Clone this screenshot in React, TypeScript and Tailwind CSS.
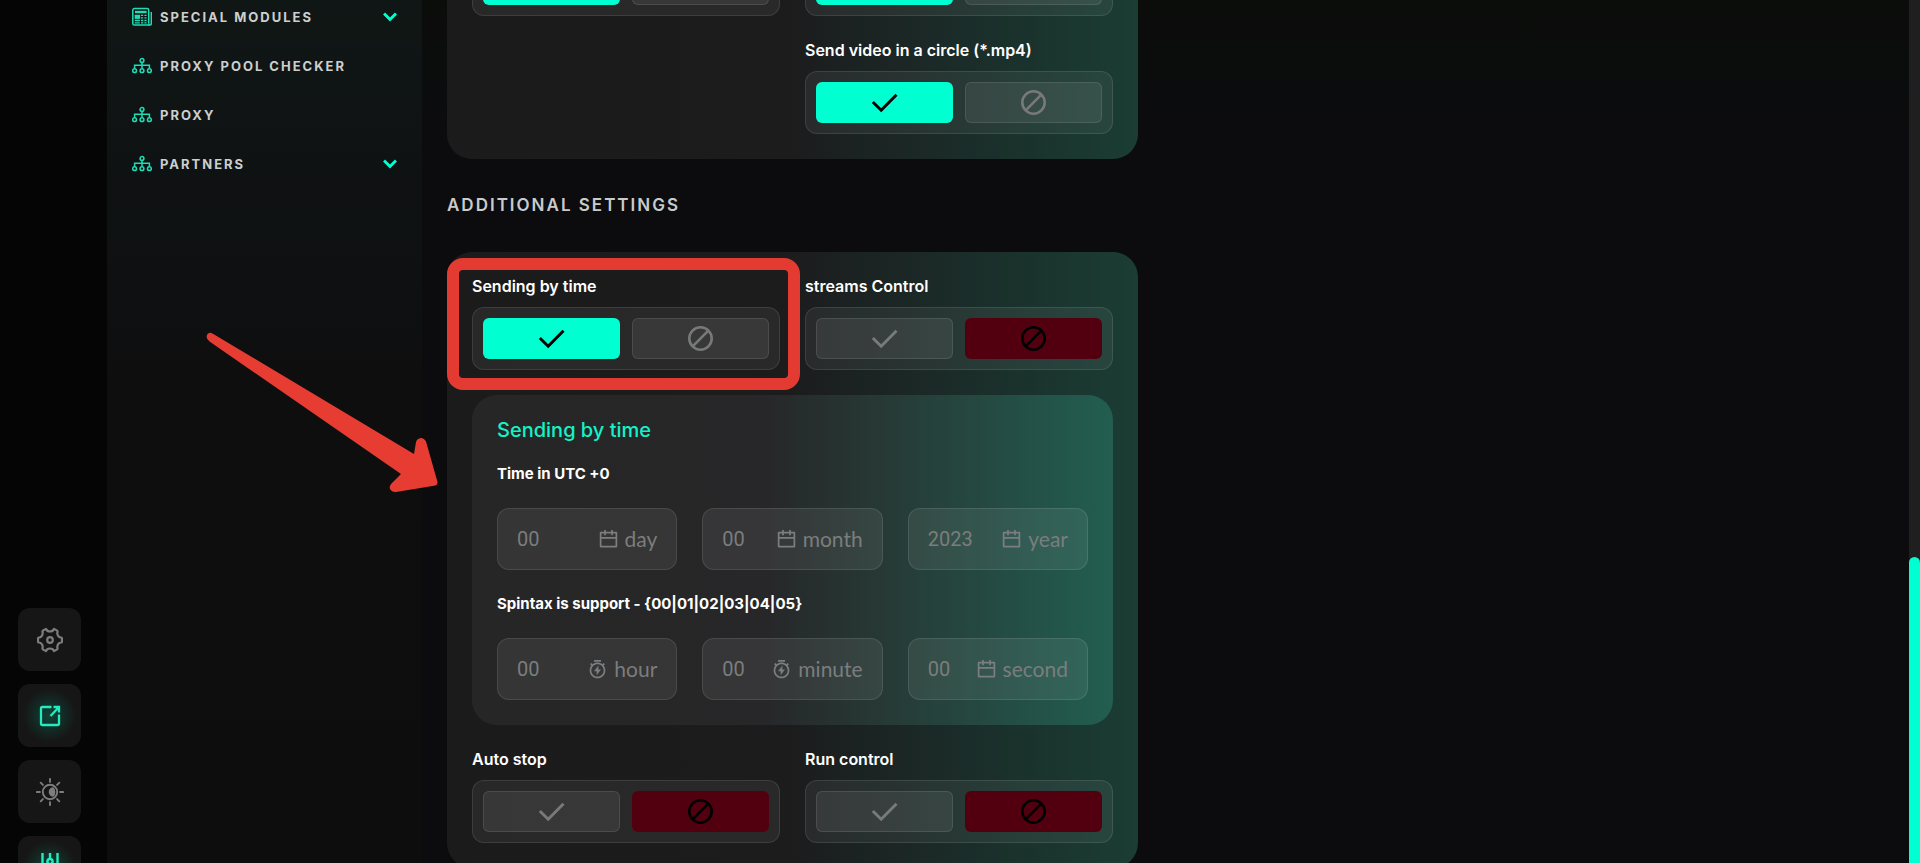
import React, { useState } from "react";
import { RiCalendarLine, RiTimerFlashLine } from "react-icons/ri";

const BanIcon = () => (
  <svg className="h-[26px] w-[26px]" viewBox="0 0 26 26" fill="none" stroke="currentColor" strokeWidth="2.6">
    <circle cx="12.5" cy="12.5" r="11.2" />
    <path d="M4.700 20.300 20.300 4.700" />
  </svg>
);

const CheckIcon = () => (
  <svg className="h-[26px] w-[26px]" viewBox="0 0 26 26" fill="none" stroke="currentColor" strokeWidth="3">
    <path d="M.8 12 9.200 20.200 24.500 4.800" />
  </svg>
);

const TreeIcon = () => (
  <svg className="h-5 w-5" viewBox="0 0 20 20" fill="none" stroke="currentColor" strokeWidth="1.5">
    <circle cx="10" cy="4.500" r="1.900" />
    <circle cx="2.600" cy="14.700" r="1.900" />
    <circle cx="10" cy="14.700" r="1.900" />
    <circle cx="17.400" cy="14.700" r="1.900" />
    <path d="M10 6.500v6.300M2.600 12.800V9.200h14.800v3.600" />
  </svg>
);

const ModulesIcon = () => (
  <svg className="h-5 w-5" viewBox="0 0 20 20" fill="none" stroke="currentColor" strokeWidth="1.5">
    <path d="M16.700 16.500V3a1.600 1.600 0 0 0-1.600-1.600H2.300A1.600 1.600 0 0 0 .8 3v13.500a1.600 1.600 0 0 0 1.600 1.600h15.300a1.600 1.600 0 0 0 1.600-1.600V5" />
    <path d="M16.700 16.500c0 .9.400 1.600 1.100 1.600" />
    <path d="M3 5h11.600" strokeWidth="2.400" />
    <rect x="3.400" y="8.500" width="4" height="2.600" fill="currentColor" />
    <path d="M9 8.400h2.200M12.400 8.400h2.200M9 10.900h2.200M12.400 10.900h2.200M2.800 13.500h5M9 13.500h2.200M12.400 13.500h2.200M2.800 15.900h5M9 15.900h2.200M12.400 15.900h2.200" strokeWidth="1.300" />
  </svg>
);

const ChevronIcon = () => (
  <svg className="h-[14px] w-[14px]" viewBox="0 0 14 14" fill="none" stroke="#00ffd1" strokeWidth="3">
    <path d="M1 3.500l6 6L13 3.500" />
  </svg>
);

const navItems = [
  { label: "Special modules", icon: <ModulesIcon />, expandable: true },
  { label: "Proxy pool checker", icon: <TreeIcon />, expandable: false },
  { label: "Proxy", icon: <TreeIcon />, expandable: false },
  { label: "Partners", icon: <TreeIcon />, expandable: true },
];

const railItems = [
  {
    name: "Settings",
    active: false,
    icon: (
      <svg className="h-[26px] w-[26px]" viewBox="0 0 26 26" fill="none" stroke="currentColor" strokeWidth="2.200" strokeLinejoin="round">
        <path d="M6.200 3.400 9 1.900c.5 1.600 2 2.600 4 2.600s3.500-1 4-2.600l2.800 1.500c.6.400.9.800.7 1.500-.5 1.800 0 3.200 1 4.300.7.800 1.600 1.200 2.500 1.300.6.100 1 .5 1 1.100v2.800c0 .6-.4 1-1 1.100-.9.100-1.800.5-2.500 1.300-1 1.100-1.500 2.500-1 4.300.2.700-.1 1.100-.7 1.500L17 24.100c-.5-1.600-2-2.600-4-2.600s-3.500 1-4 2.600l-2.800-1.500c-.6-.4-.9-.8-.7-1.500.5-1.800 0-3.200-1-4.300-.7-.8-1.600-1.200-2.500-1.300-.6-.1-1-.5-1-1.100v-2.800c0-.6.400-1 1-1.100.9-.1 1.800-.5 2.500-1.300 1-1.100 1.500-2.500 1-4.300-.2-.7.100-1.100.7-1.500Z" />
        <circle cx="13" cy="13" r="2.800" />
      </svg>
    ),
  },
  {
    name: "Open in new window",
    active: true,
    icon: (
      <svg className="h-[22px] w-[22px]" viewBox="0 0 22 22" fill="none" stroke="currentColor" strokeWidth="2.300">
        <path d="M12.500 2H3.500A1.500 1.500 0 0 0 2 3.500v15A1.500 1.500 0 0 0 3.500 20h15a1.500 1.500 0 0 0 1.500-1.500V9.500" />
        <path d="M14.500 2H20v5.500M20 2l-8.500 9" />
      </svg>
    ),
  },
  {
    name: "Theme",
    active: false,
    icon: (
      <svg className="h-7 w-7" viewBox="0 0 28 28" fill="none" stroke="currentColor" strokeWidth="1.900" strokeLinecap="round">
        <circle cx="14" cy="14" r="7.200" />
        <path d="M17.500 9.200a4.800 4.800 0 1 0 0 9.600 7 7 0 0 0 0-9.600Z" fill="currentColor" stroke="none" />
        <path d="M14 .9v3M14 24.100v3M.9 14h3M24.100 14h3M4.700 4.700l2.200 2.200M21.100 21.100l2.200 2.200M4.700 23.300l2.200-2.200M21.100 6.900l2.200-2.200" />
      </svg>
    ),
  },
  {
    name: "Controls",
    active: true,
    icon: (
      <svg className="h-[30px] w-5" viewBox="0 0 20 30" fill="none" stroke="currentColor" strokeWidth="2.400">
        <path d="M2.500 0v16M10 0v5M17.500 0v16M10 12v15" />
        <circle cx="10" cy="8.600" r="2.600" />
        <circle cx="2.500" cy="19" r="2.600" />
        <circle cx="17.500" cy="19" r="2.600" />
      </svg>
    ),
  },
];

const Toggle = ({ name, initial }: { name: string; initial: boolean }) => {
  const [enabled, setEnabled] = useState(initial);

  return (
    <div
      role="group"
      aria-label={name}
      className="grid h-[63px] grid-cols-2 gap-3 rounded-xl border border-white/10 bg-white/[0.06] p-[10px]"
    >
      <button
        type="button"
        aria-label="On"
        aria-pressed={enabled}
        onClick={() => setEnabled(true)}
        className={
          enabled
            ? "flex items-center justify-center rounded-md bg-[#00ffd1] text-black"
            : "flex items-center justify-center rounded-md border border-white/10 bg-white/[0.07] text-[#787979]"
        }
      >
        <CheckIcon />
      </button>
      <button
        type="button"
        aria-label="Off"
        aria-pressed={!enabled}
        onClick={() => setEnabled(false)}
        className={
          enabled
            ? "flex items-center justify-center rounded-md border border-white/10 bg-white/[0.07] text-[#787979]"
            : "flex items-center justify-center rounded-md bg-[#52000f] text-black"
        }
      >
        <BanIcon />
      </button>
    </div>
  );
};

const ToggleField = ({ label, initial }: { label: string; initial: boolean }) => (
  <div className="flex flex-col gap-3">
    <span className="text-[16px] leading-[18px] font-semibold text-white">{label}</span>
    <Toggle name={label} initial={initial} />
  </div>
);

const TimeField = ({ unit, placeholder, icon }: { unit: string; placeholder: string; icon: React.ReactNode }) => (
  <label className="flex h-[62px] min-w-0 items-center rounded-xl border border-white/10 bg-white/[0.07] px-[19px] text-[#7b7d7e]">
    <input
      type="text"
      placeholder={placeholder}
      className="w-0 min-w-0 flex-1 bg-transparent font-[Roboto,sans-serif] text-[20px] leading-6 outline-none placeholder:text-[#7b7d7e]"
    />
    {icon}
    <span className="ml-1.5 font-[Lato,sans-serif] text-[21px] leading-6">{unit}</span>
  </label>
);

const calendar = <RiCalendarLine className="h-[21px] w-[21px]" />;
const timer = <RiTimerFlashLine className="h-[21px] w-[21px]" />;

export default function App() {
  return (
    <div className="relative flex h-screen overflow-hidden bg-[#0c0c0e] font-[Inter,sans-serif] text-white">
      <aside className="flex w-[107px] shrink-0 flex-col justify-end bg-[#050505] pl-[18px]">
        <div className="-mb-9 flex flex-col gap-[13px]">
          {railItems.map((item) => (
            <button
              key={item.name}
              type="button"
              aria-label={item.name}
              className={
                item.active
                  ? "flex h-[63px] w-[63px] items-center justify-center rounded-xl bg-[radial-gradient(circle,#0f4437_0%,#161616_60%)] text-[#22ecc0]"
                  : "flex h-[63px] w-[63px] items-center justify-center rounded-xl bg-[#161616] text-[#7d7d7d]"
              }
            >
              {item.icon}
            </button>
          ))}
        </div>
      </aside>

      <nav className="w-[315px] shrink-0 bg-[linear-gradient(180deg,#0f1715_0%,#0f1213_20%,#0e0e0f_45%,#0d0d0e_100%)] px-[25px]">
        <ul className="-mt-2 flex flex-col">
          {navItems.map((item) => (
            <li key={item.label}>
              <a href="#" className="flex h-[49px] items-center text-[#1fdcb4]">
                {item.icon}
                <span className="ml-2 flex-1 text-[13px] leading-5 font-bold tracking-[2px] text-[#cdcfcf] uppercase">
                  {item.label}
                </span>
                {item.expandable && <ChevronIcon />}
              </a>
            </li>
          ))}
        </ul>
      </nav>

      <main className="min-w-0 flex-1 bg-[linear-gradient(180deg,#0b0d0b_0%,#0c0c0e_15%)] pl-[25px]">
        <div className="-mt-[72px] w-[691px]">
          <section className="grid grid-cols-2 gap-[25px] rounded-[25px] bg-[linear-gradient(90deg,#1b1b1c_0%,#1c1c1d_50%,#1b2625_65%,#1a3d34_100%)] p-[25px]">
            <Toggle name="Send photo" initial={true} />
            <Toggle name="Send audio" initial={true} />
            <div />
            <ToggleField label="Send video in a circle (*.mp4)" initial={true} />
          </section>

          <h2 className="py-[33px] text-[17px] leading-[27px] font-semibold tracking-[2px] text-[#c9cbca] uppercase">
            Additional settings
          </h2>

          <section className="relative grid grid-cols-2 gap-[25px] rounded-[25px] bg-[linear-gradient(90deg,#1b1b1c_0%,#1c1c1d_50%,#1b2625_65%,#1a3d34_100%)] p-[25px]">
            <ToggleField label="Sending by time" initial={true} />
            <ToggleField label="streams Control" initial={false} />

            <div className="col-span-2 flex flex-col gap-[25px] rounded-[25px] bg-[linear-gradient(90deg,#262627_0%,#272628_45%,#263a36_65%,#225e51_100%)] p-[25px]">
              <h3 className="text-[20px] leading-5 font-medium text-[#12f3c7]">Sending by time</h3>
              <p className="text-[15px] leading-[18px] font-bold">Time in UTC +0</p>
              <div className="grid grid-cols-3 gap-[25px]">
                <TimeField unit="day" placeholder="00" icon={calendar} />
                <TimeField unit="month" placeholder="00" icon={calendar} />
                <TimeField unit="year" placeholder="2023" icon={calendar} />
              </div>
              <p className="text-[15px] leading-[18px] font-bold">Spintax is support - {"{00|01|02|03|04|05}"}</p>
              <div className="grid grid-cols-3 gap-[25px]">
                <TimeField unit="hour" placeholder="00" icon={timer} />
                <TimeField unit="minute" placeholder="00" icon={timer} />
                <TimeField unit="second" placeholder="00" icon={calendar} />
              </div>
            </div>

            <ToggleField label="Auto stop" initial={false} />
            <ToggleField label="Run control" initial={false} />

            {/* highlight around the first setting */}
            <div className="pointer-events-none absolute top-[6px] left-0 h-[132px] w-[353px] rounded-2xl border-[12px] border-[#e33b31]" />
            <svg
              className="pointer-events-none absolute top-[79px] left-[-242px] h-[166px] w-[240px]"
              viewBox="0 0 240 166"
              fill="#e63c32"
            >
              <path d="M7.500 2.500Q3 .5 1.800 4.500Q1 8 4.500 10.500L196 143L186.500 152.500Q184 155.500 185 158Q187 161.500 191 161L230.500 154.500Q233 153.500 232.500 151L221 110.500Q219 107 216 107Q212 107.500 211 111L209 123Z" />
            </svg>
          </section>
        </div>
      </main>

      <div aria-hidden="true" className="flex w-[11px] shrink-0 flex-col justify-end bg-[#1f1f20]">
        <div className="h-[306px] rounded-t-full bg-[#00ffd1]" />
      </div>
    </div>
  );
}
